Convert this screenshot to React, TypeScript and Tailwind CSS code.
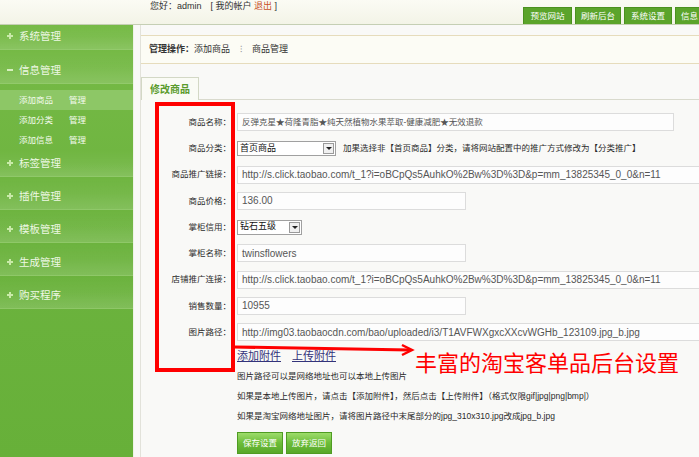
import React from "react";

function SideHeader({ label, h, minus }: { label: string; h: string; minus?: boolean }) {
  return (
    <div className={`${h} flex items-end pb-[6px] pl-[7px] border-b border-[#a6d685]/60 bg-gradient-to-b from-transparent via-[#ffffff]/5 to-[#ffffff]/15`}>
      <div className="flex items-center h-[14px]">
        <span className="w-[12px] flex items-center justify-start">
          {minus ? (
            <span className="block w-[6px] h-[2px] bg-[#d6efbf]"></span>
          ) : (
            <span className="relative block w-[6px] h-[6px]">
              <span className="absolute left-[2px] top-0 w-[2px] h-[6px] bg-[#c9eaa9]"></span>
              <span className="absolute left-0 top-[2px] w-[6px] h-[2px] bg-[#c9eaa9]"></span>
            </span>
          )}
        </span>
        <span className="text-[10.5px] leading-[14px] text-[#eef8e4]">{label}</span>
      </div>
    </div>
  );
}

function SubItem({ label, active }: { label: string; active?: boolean }) {
  return (
    <div className={`h-[20px] flex items-center pl-[19px] text-[8.5px] text-[#f4fbee] ${active ? "bg-[#8dc766]" : ""}`}>
      <span className="w-[50px]">{label}</span>
      <span>管理</span>
    </div>
  );
}

function Row({ label, children }: { label: string; children: React.ReactNode }) {
  return (
    <div className="h-[26.25px] flex items-center">
      <div className="w-[90px] shrink-0 text-right text-[8.5px] text-[#2a2a2a]">{label}</div>
      <div className="ml-[6px] flex items-center">{children}</div>
    </div>
  );
}

function Input({ w, children, latin }: { w: string; children: React.ReactNode; latin?: boolean }) {
  return (
    <div className={`${w} shrink-0 h-[18px] border border-[#dcdcdc] bg-[#fdfdfd] px-[4px] flex items-center whitespace-nowrap overflow-hidden text-[#555] ${latin ? "text-[10px]" : "text-[8.5px] text-[#333]"}`}>
      {children}
    </div>
  );
}

function Select({ w, children }: { w: string; children: React.ReactNode }) {
  return (
    <div className={`${w} shrink-0 h-[15px] border border-[#a0a0a0] bg-white flex items-center justify-between pl-[2px] pr-[1px] text-[9px] text-[#111]`}>
      <span>{children}</span>
      <span className="w-[11px] h-[11px] border border-[#9a9a9a] bg-[#f0f0f0] flex items-center justify-center">
        <span className="block w-0 h-0 border-l-[3px] border-r-[3px] border-t-[3px] border-l-transparent border-r-transparent border-t-[#222]"></span>
      </span>
    </div>
  );
}

export default function App() {
  const url = "http://s.click.taobao.com/t_1?i=oBCpQs5AuhkO%2Bw%3D%3D&p=mm_13825345_0_0&n=11";
  return (
    <div className="relative w-[699px] h-[457px] overflow-hidden bg-[#f9f9f7] font-['Liberation_Sans','Noto_Sans_CJK_SC',sans-serif] text-[8.5px] text-[#2a2a2a]">
      {/* top bar */}
      <div className="h-[25px] flex items-start border-b border-[#c5cfb4] bg-gradient-to-b from-[#fbfbf4] to-[#f3f4e7]">
        <div className="w-[523px] shrink-0 pl-[150px] leading-[12px] text-[9px] text-[#333] whitespace-nowrap">
          您好：admin　[ 我的帐户 <span className="text-[#c8501e]">退出</span> ]
        </div>
        <div className="mt-[7px] flex gap-[3px]">
          <div className="w-[49px] h-[17px] bg-[#5ba42b] border-x border-t border-[#4b911f] text-white text-[8.5px] flex items-center justify-center">预览网站</div>
          <div className="w-[46px] h-[17px] bg-[#5ba42b] border-x border-t border-[#4b911f] text-white text-[8.5px] flex items-center justify-center">刷新后台</div>
          <div className="w-[48px] h-[17px] bg-[#5ba42b] border-x border-t border-[#4b911f] text-white text-[8.5px] flex items-center justify-center">系统设置</div>
          <div className="w-[30px] h-[17px] bg-[#5ba42b] border-l border-t border-[#4b911f] text-white text-[8.5px] flex items-center justify-start pl-[5px]">信息</div>
        </div>
      </div>

      <div className="flex h-[432px]">
        {/* sidebar */}
        <aside className="w-[133px] shrink-0 bg-gradient-to-b from-[#76ba46] via-[#6cb33e] to-[#67b039]">
          <SideHeader label="系统管理" h="h-[25px]" />
          <SideHeader label="信息管理" h="h-[34px]" minus />
          <div className="pt-[6px]">
            <SubItem label="添加商品" active />
            <SubItem label="添加分类" />
            <SubItem label="添加信息" />
          </div>
          <SideHeader label="标签管理" h="h-[27px]" />
          <SideHeader label="插件管理" h="h-[33px]" />
          <SideHeader label="模板管理" h="h-[33px]" />
          <SideHeader label="生成管理" h="h-[33px]" />
          <SideHeader label="购买程序" h="h-[33px]" />
        </aside>
        <div className="w-[7px] shrink-0 border-l border-[#eef3e6] bg-[#f9f9f7]"></div>

        {/* main */}
        <main className="flex-1 min-w-0 overflow-hidden border-l border-[#e2e2da] pt-[10px]">
          <div className="h-[29px] border-y border-[#e6dcbc] bg-[#fcfcf5] flex items-center pl-[8px] text-[9px] text-[#333] whitespace-nowrap">
            <span className="font-bold">管理操作：</span>
            <span>添加商品</span>
            <span className="ml-[10px] text-[#999]">⁝</span>
            <span className="ml-[10px]">商品管理</span>
          </div>

          <div className="mt-[13px] h-[23px] flex items-end border-b border-[#d9dacd]">
            <div className="w-[58px] h-[23px] -mb-px border border-b-0 border-[#d3d8c5] bg-[#fafbf5] flex items-center justify-center text-[10px] font-bold text-[#5b9b2d]">
              修改商品
            </div>
          </div>

          <div className="pt-[9px]">
            <Row label="商品名称：">
              <Input w="w-[437px]">反弹克星★荷隆青脂★纯天然植物水果萃取-健康减肥★无效退款</Input>
            </Row>
            <Row label="商品分类：">
              <Select w="w-[99px]">首页商品</Select>
              <span className="ml-[7px] whitespace-nowrap text-[8.5px] text-[#2a2a2a]">加果选择非【首页商品】分类，请将网站配置中的推广方式修改为【分类推广】</span>
            </Row>
            <Row label="商品推广链接：">
              <Input w="w-[480px]" latin>{url}</Input>
            </Row>
            <Row label="商品价格：">
              <Input w="w-[229px]" latin>136.00</Input>
            </Row>
            <Row label="掌柜信用：">
              <Select w="w-[65px]">钻石五级</Select>
            </Row>
            <Row label="掌柜名称：">
              <Input w="w-[229px]" latin>twinsflowers</Input>
            </Row>
            <Row label="店铺推广连接：">
              <Input w="w-[480px]" latin>{url}</Input>
            </Row>
            <Row label="销售数量：">
              <Input w="w-[229px]" latin>10955</Input>
            </Row>
            <Row label="图片路径：">
              <Input w="w-[480px]" latin>http://img03.taobaocdn.com/bao/uploaded/i3/T1AVFWXgxcXXcvWGHb_123109.jpg_b.jpg</Input>
            </Row>

            <div className="ml-[96px] mt-[1px]">
              <div className="h-[20px] flex items-center text-[11px] text-[#33337a] whitespace-nowrap">
                <span className="underline">添加附件</span>
                <span className="ml-[11px] underline">上传附件</span>
              </div>
              <div className="h-[20px] flex items-center whitespace-nowrap">图片路径可以是网络地址也可以本地上传图片</div>
              <div className="h-[20px] flex items-center whitespace-nowrap">如果是本地上传图片，请点击【添加附件】，然后点击【上传附件】（格式仅限gif|jpg|png|bmp|）</div>
              <div className="h-[20px] flex items-center whitespace-nowrap">如果是淘宝网络地址图片，请将图片路径中末尾部分的jpg_310x310.jpg改成jpg_b.jpg</div>
              <div className="mt-[6px] flex gap-[3px]">
                <div className="w-[46px] h-[22px] border border-[#4f9c22] bg-gradient-to-b from-[#9ddc6a] via-[#6cbd38] to-[#58a82a] text-white text-[8.5px] flex items-center justify-center">保存设置</div>
                <div className="w-[46px] h-[22px] border border-[#4f9c22] bg-gradient-to-b from-[#9ddc6a] via-[#6cbd38] to-[#58a82a] text-white text-[8.5px] flex items-center justify-center">放弃返回</div>
              </div>
            </div>
          </div>
        </main>
      </div>

      {/* annotations */}
      <div className="absolute left-[155px] top-[102px] w-[80px] h-[270px] border-[4px] border-[#ff0000]"></div>
      <svg className="absolute left-[230px] top-[340px]" width="190" height="20" viewBox="0 0 190 20">
        <line x1="4" y1="7" x2="180" y2="10" stroke="#ff0000" strokeWidth="3" />
        <path d="M172 5 L182 10 L172 15" fill="none" stroke="#ff0000" strokeWidth="2.5" />
      </svg>
      <div className="absolute left-[415px] top-[350px] text-[22px] leading-[28px] text-[#ff0000] whitespace-nowrap">丰富的淘宝客单品后台设置</div>
    </div>
  );
}
